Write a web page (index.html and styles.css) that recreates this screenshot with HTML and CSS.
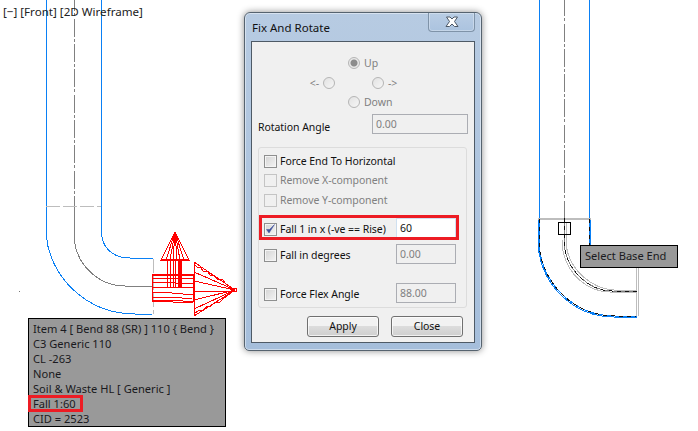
FILE: index.html
```html
<!DOCTYPE HTML>
<html><head>
  <meta charset="utf-8">
  <title>Fix And Rotate</title>
  <link rel="stylesheet" href="styles.css">
</head>
<body>

<!-- model space: everything here sits at drawing coordinates -->
<svg class="cad" width="698" height="431" viewBox="0 0 698 431">
  <g class="blue">
    <path d="M46.500 0V237C50 275 85 314 135 314H152"/>
    <path d="M101.500 0V233C102 247 112 258 130 258H153"/>
    <path d="M539.500 0V249C544 285 575 316 615 316H637"/>
    <path d="M538.500 219V249C543 286 574 317 614 317H637"/>
    <path d="M589.500 0V246"/>
    <path d="M590.500 219V246"/>
  </g>
  <g class="center">
    <path class="left" d="M74.500 0V206"/>
    <path d="M74.500 206V242C78 265 98 286 125 286H152"/>
    <path class="right" d="M564.500 0V218"/>
    <path d="M564.500 218V247C568 272 590 291 612 291H637"/>
  </g>
  <g class="light">
    <path class="dash" d="M46 206H101"/>
    <path class="dash" d="M153.500 259V314"/>
    <path d="M538 218.500H591M538 219.500H591"/>
    <path d="M636.500 267V316M638.500 267V316"/>
    <path d="M566.500 222V247C570 270 592 289 614 290H637"/>
    <path d="M562.500 240V248C566 274 588 292 610 292H637"/>
  </g>
  <g class="black">
    <path d="M539.500 219V249C544 285 575 316 615 316H636"/>
    <path d="M589.500 219V246"/>
    <path d="M564.500 218V247C568 272 590 291 612 291H637"/>
  </g>
  <rect class="pick" x="558.500" y="222.500" width="12" height="12"/>
  <path class="speck" d="M19 291h1"/>
  <g class="red">
    <path d="M175 232L161 260H189ZM175 232L166 260M175 232L170 260M175 232L173 260M175 232L177 260M175 232L180 260M175 232L184 260"/>
    <path d="M161 259H189"/>
    <path d="M167.500 260V288M170.500 260V288M173.500 260V288M175.500 260V288M178 260V288M179 260V288M180 260V288M181 260V288"/>
    <path d="M152 274H194M152 275H194M152 278H194M152 282L175 283H194M152 287H194M152 292L172 293L193 295M152 297H172L192 299M152 301H173M152 300H173L193 302M173 302H193"/>
    <path d="M152.500 275V301M193.500 274V302"/>
    <path d="M194 262V316L235 290ZM194 272L235 290M194 281L235 290M194 291H235M194 300L235 290M194 309L235 290"/>
    <path d="M194 264L198 268L200 267L204 272L207 271L211 276L214 275L218 280L222 279L226 284L235 290M194 314L199 310L202 311L207 306L210 307L215 302L219 303L224 298L235 290"/>
    <path d="M232 288H236V291H232Z"/>
  </g>
</svg>

<div class="viewlabel">[−] [Front] [2D Wireframe]</div>

<div class="tip item-tip">
  <div>Item 4 [ Bend 88 (SR) ] 110 { Bend }</div>
  <div>C3 Generic 110</div>
  <div>CL -263</div>
  <div>None</div>
  <div>Soil &amp; Waste HL [ Generic ]</div>
  <div><span class="mark-fall">Fall 1:60</span></div>
  <div>CID = 2523</div>
</div>

<div class="tip base-tip">Select Base End</div>

<div class="dialog">
  <div class="titlebar">
    <span class="title">Fix And Rotate</span>
    <span class="closebtn">
      <svg width="16" height="12" viewBox="0 0 16 12"><path class="x" d="M2.500 1H6L8 3L10 1H13.500L10.500 5.500L14 10.500H10.500L8 8L5.500 10.500H2L5.500 5.500Z"/></svg>
    </span>
  </div>
  <div class="client">
    <div class="dirs">
      <label class="dir up"><i class="radio on"></i>Up</label>
      <label class="dir lft">&lt;-<i class="radio"></i></label>
      <label class="dir rgt"><i class="radio"></i>-&gt;</label>
      <label class="dir down"><i class="radio"></i>Down</label>
    </div>
    <div class="angle">
      <span class="angle-label">Rotation Angle</span>
      <span class="field wide off">0.00</span>
    </div>
    <div class="group">
      <div class="row"><i class="check"></i>Force End To Horizontal</div>
      <div class="row off r2"><i class="check"></i>Remove X-component</div>
      <div class="row off r3"><i class="check"></i>Remove Y-component</div>
      <div class="row r4 marked"><i class="check">
        <svg width="11" height="11" viewBox="0 0 11 11"><path class="tick" d="M1.500 5.500L4 9L9.500 .5L4.500 5.500Z"/></svg>
      </i>Fall 1 in x (-ve == Rise)<span class="field live">60</span></div>
      <div class="row r5"><i class="check"></i>Fall in degrees<span class="field off">0.00</span></div>
      <div class="row r6"><i class="check"></i>Force Flex Angle<span class="field off">88.00</span></div>
    </div>
    <div class="buttons">
      <span class="btn">Apply</span>
      <span class="btn">Close</span>
    </div>
  </div>
</div>

</body>
</html>
```

FILE: styles.css
```css
html,body {
  margin: 0;
  padding: 0;
  background: #fff;
  font-family: "Noto Sans", sans-serif;
  font-size: 10.500px;
  letter-spacing: -.05px;
  color: #111;
}

body {
  width: 698px;
  height: 431px;
  overflow: hidden;
  position: relative;
}

/* drawing */
.cad { position: absolute; left: 0; top: 0; shape-rendering: crispEdges; }
.cad path, .cad rect { fill: none; stroke-width: 1; }
.blue path { stroke: #0a80f5; }
.center path { stroke: #808080; }
.center .left { stroke-dasharray: 3 2.300 18 2; stroke-dashoffset: 11.900; }
.center .right { stroke-dasharray: 3 2.300 18 2; stroke-dashoffset: 7; }
.light path { stroke: #bdbdbd; }
.light .dash { stroke-dasharray: 14 3; }
.black path { stroke: #111; stroke-dasharray: 4 4; }
.cad .pick { stroke: #000; }
.cad .speck { stroke: #777; }
.red path { stroke: #f00; }

.viewlabel {
  position: absolute;
  left: 3px;
  top: 4px;
  line-height: 15px;
  font-size: 11.600px;
  letter-spacing: 0;
  color: #222;
  white-space: nowrap;
}

/* tooltips on the model */
.tip {
  position: absolute;
  box-sizing: border-box;
  background: #999;
  border: 1px solid #000;
  color: #1a1a20;
  white-space: nowrap;
  font-size: 11.100px;
  letter-spacing: 0;
}
.item-tip {
  left: 28px;
  top: 318px;
  width: 198px;
  height: 109px;
  padding: 2px 4px;
  line-height: 15px;
}
.base-tip {
  left: 580px;
  top: 245px;
  width: 98px;
  height: 23px;
  padding: 0 4px;
  line-height: 19px;
}
.mark-fall { position: relative; display: inline-block; }
.mark-fall::after {
  content: "";
  position: absolute;
  left: -5px;
  right: -7px;
  top: -1px;
  bottom: -1px;
  border: 3px solid #ed1c24;
}

/* dialog window */
.dialog {
  position: absolute;
  left: 244px;
  top: 12px;
  width: 238px;
  height: 339px;
  box-sizing: border-box;
  padding: 0 6px 7px;
  display: flex;
  flex-direction: column;
  border: 1px solid #56636f;
  border-radius: 6px 6px 5px 5px;
  background: linear-gradient(#b7cbe2, #a5bedb);
  box-shadow: 0 0 7px rgba(0,0,0,.45), inset 0 0 0 1px rgba(255,255,255,.45);
}
.titlebar {
  height: 28px;
  flex: none;
  display: flex;
  justify-content: space-between;
}
.title { font-size: 11.500px; letter-spacing: 0; margin: 7px 0 0 1px; line-height: 16px; color: #111; }
.closebtn {
  width: 47px;
  height: 19px;
  box-sizing: border-box;
  display: flex;
  align-items: center;
  justify-content: center;
  border: 1px solid #7f93a8;
  border-top: 0;
  border-radius: 0 0 4px 4px;
  background: linear-gradient(#b9cde4, #abc3df);
  box-shadow: inset 0 0 0 1px rgba(255,255,255,.3);
}
.x { fill: #fff; stroke: #4c5866; stroke-width: 1; }

.client {
  flex: 1;
  box-sizing: border-box;
  padding: 11px 6px 0;
  background: #f0f0f0;
  border: 1px solid #4e5a66;
}

.dirs {
  display: grid;
  grid-template-columns: 37px 13px 24px 40px;
  grid-template-rows: 20px 20px 18px;
  margin-left: 40px;
  color: #808080;
}
.dir { display: flex; align-items: center; gap: 4px; white-space: nowrap; }
.up { grid-column: 3; grid-row: 1; }
.lft { grid-column: 1; grid-row: 2; justify-content: flex-end; }
.rgt { grid-column: 4; grid-row: 2; }
.down { grid-column: 3; grid-row: 3; }

.radio {
  width: 12px;
  height: 12px;
  flex: none;
  box-sizing: border-box;
  border: 1px solid #b5b5b5;
  border-radius: 50%;
  background: linear-gradient(135deg, #e2e2e2, #f6f6f6);
}
.radio.on { background: radial-gradient(circle, #8c8c8c 0 3px, #e9e9e9 4px); }

.angle { display: flex; justify-content: space-between; margin-top: 3px; height: 20px; }
.angle-label { padding-top: 5px; line-height: 16px; }

.field {
  width: 60px;
  height: 20px;
  box-sizing: border-box;
  flex: none;
  margin-left: auto;
  margin-bottom: 2px;
  padding-left: 3px;
  line-height: 18px;
  border: 1px solid #abadb3;
  background: #fff;
}
.field.off { background: #f0f0f0; color: #808080; }
.field.wide { width: 96px; margin-bottom: 0; }
.field.live { border-color: #cfe0f0; }

.group {
  margin-top: 13px;
  width: 209px;
  height: 161px;
  box-sizing: border-box;
  padding: 4px 10px 0 5px;
  border: 1px solid #dcdcdc;
  border-radius: 3px;
}
.row { display: flex; align-items: center; height: 18px; position: relative; white-space: nowrap; }
.row.off { color: #808080; }
.r2 { margin-top: 1px; }
.r3 { margin-top: 2px; }
.r4 { margin-top: 11px; }
.r5 { margin-top: 8px; }
.r6 { margin-top: 21px; }
.marked::after {
  content: "";
  position: absolute;
  left: -5px;
  right: -3px;
  top: -5px;
  bottom: -2px;
  border: 3px solid #ed1c24;
}

.check {
  width: 13px;
  height: 13px;
  flex: none;
  box-sizing: border-box;
  margin: 1px 3px 0 0;
  border: 1px solid #8e8f8f;
  background: linear-gradient(135deg, #d4d4d4, #f4f4f4);
  display: flex;
  align-items: center;
  justify-content: center;
  box-shadow: inset 0 0 0 1px #f4f4f4;
}
.off .check { border-color: #c4c4c4; background: #f0f0f0; box-shadow: none; }
.tick { fill: #3c4f9c; stroke: #3c4f9c; stroke-width: .5; }

.buttons { display: flex; justify-content: flex-end; gap: 12px; margin-top: 8px; padding-right: 5px; }
.btn {
  width: 72px;
  height: 21px;
  box-sizing: border-box;
  text-align: center;
  line-height: 19px;
  border: 1px solid #707070;
  border-radius: 3px;
  background: linear-gradient(#f2f2f2 0 45%, #dcdcdc 50%, #cfcfcf);
  box-shadow: inset 0 0 0 1px rgba(255,255,255,.7);
}
```
